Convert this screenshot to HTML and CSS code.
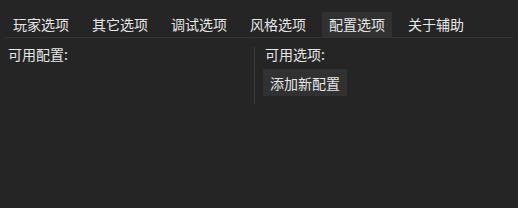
FILE: index.html
```html
<!DOCTYPE html>
<html lang="zh">
<head>
  <meta charset="UTF-8" />
  <title>配置选项</title>
  <link rel="stylesheet" href="styles.css">
</head>
<body>
  <div class="tabs">
    <div class="tab">玩家选项</div>
    <div class="tab">其它选项</div>
    <div class="tab">调试选项</div>
    <div class="tab">风格选项</div>
    <div class="tab active">配置选项</div>
    <div class="tab">关于辅助</div>
  </div>
  <div class="panel">
    <div class="col left">
      <div class="label">可用配置:</div>
    </div>
    <div class="col right">
      <div class="label">可用选项:</div>
      <button class="btn">添加新配置</button>
    </div>
  </div>
</body>
</html>
```

FILE: styles.css
```css
body {
  margin: 0;
  background-color: #252525;
  color: #e6e6e6;
  font-family: "Noto Sans CJK SC", "Noto Sans", sans-serif;
  font-size: 14px;
}
.tabs {
  display: flex;
  gap: 9px;
  margin: 12px 5px 0 5px;
  padding-left: 1px;
  border-bottom: 1px solid #333333;
}
.tab {
  height: 25px;
  line-height: 25px;
  padding: 0 7px;
}
.tab.active {
  background-color: #313131;
}
.panel {
  display: flex;
  padding-top: 6px;
}
.col.left {
  width: 246px;
  padding-left: 8px;
  border-right: 1px solid #3a3a3a;
  height: 57px;
  margin-top: 3px;
}
.col.left .label {
  margin-top: -3px;
}
.col.right {
  padding-left: 10px;
}
.label {
  line-height: 20px;
}
.btn {
  margin-top: 5px;
  background-color: #313131;
  color: #e6e6e6;
  border: none;
  font-family: inherit;
  font-size: 14px;
  height: 27px;
  padding: 0 7px;
  margin-left: -2px;
}
```
